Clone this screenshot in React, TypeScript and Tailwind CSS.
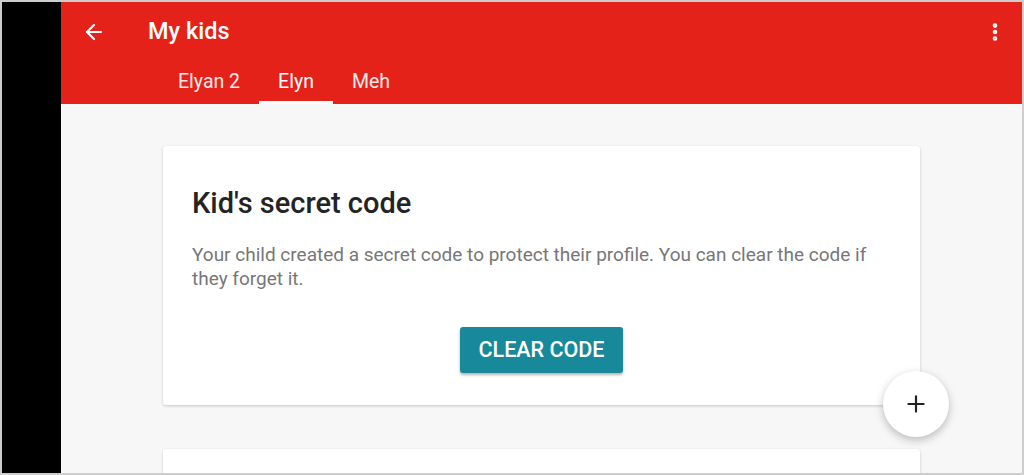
import { ArrowLeft, EllipsisVertical, Plus } from 'lucide-react';

const tabs = ['Elyan 2', 'Elyn', 'Meh'];

export default function App() {
  return (
    <div
      className="w-[1024px] h-[475px] border-2 border-[#cdcdcd] flex overflow-hidden bg-[#f7f7f7]"
      style={{ fontFamily: 'Roboto, "Noto Sans", sans-serif' }}
    >
      {/* left black strip */}
      <div className="w-[59px] shrink-0 bg-black" />

      <div className="flex-1 flex flex-col relative">
        {/* app bar */}
        <div className="h-[102px] bg-[#e42219] text-white shrink-0">
          <div className="h-[60px] flex items-center pl-[21px] pr-[16px]">
            <ArrowLeft size={24} strokeWidth={2.2} />
            <div className="ml-[42px] text-[23.5px] font-medium">My kids</div>
            <div className="ml-auto">
              <EllipsisVertical size={22} strokeWidth={3} />
            </div>
          </div>
          <div className="h-[42px] flex pl-[98px]">
            {tabs.map((t) => (
              <div
                key={t}
                className={
                  'px-[19px] flex items-center text-[19.5px] border-b-[3px] ' +
                  (t === 'Elyn' ? 'border-white' : 'border-transparent text-white/90')
                }
              >
                {t}
              </div>
            ))}
          </div>
        </div>

        {/* content */}
        <div className="flex-1 px-[102px] pt-[42px] flex flex-col gap-[44px]">
          <div className="bg-white rounded-[3px] shadow-[0_1px_3px_rgba(0,0,0,0.2)] pt-[39px] pb-[32px] px-[29px] flex flex-col">
            <h2 className="text-[29px] leading-[36px] font-medium text-[#242424]">Kid's secret code</h2>
            <p className="mt-[22px] text-[19px] leading-[24px] text-[#777777]">
              Your child created a secret code to protect their profile. You can clear the code if they forget it.
            </p>
            <div className="mt-[36px] flex justify-center">
              <button className="h-[46px] px-[19px] rounded-[3px] bg-[#17899a] text-white text-[21.5px] font-medium shadow-[0_2px_3px_rgba(0,0,0,0.3)]">
                CLEAR CODE
              </button>
            </div>
          </div>
          <div className="bg-white rounded-[3px] shadow-[0_1px_3px_rgba(0,0,0,0.2)] h-[40px] shrink-0" />
        </div>

        {/* floating add button */}
        <button className="absolute left-[822px] top-[369px] w-[66px] h-[66px] rounded-full bg-white shadow-[0_3px_8px_rgba(0,0,0,0.25)] flex items-center justify-center text-[#212121]">
          <Plus size={26} strokeWidth={2} />
        </button>
      </div>
    </div>
  );
}
